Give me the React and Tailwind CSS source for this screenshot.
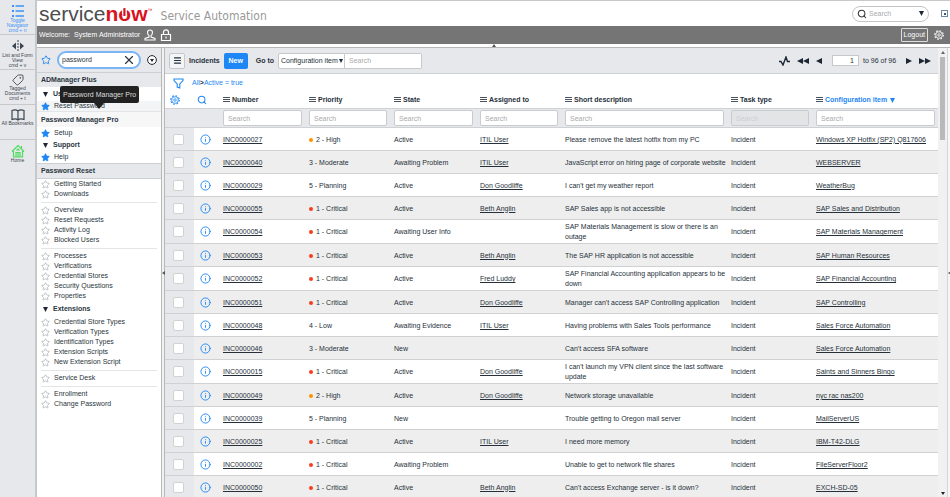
import { useState } from 'react'
import { Star, Search, Info, Menu, Tag, X } from 'lucide-react'

const RAIL_ITEMS = [
  { icon: 'list', lines: ['Toggle', 'Navigator', 'cmd + n'], active: true },
  { icon: 'split', lines: ['List and Form', 'View', 'cmd + v'] },
  { icon: 'tag', lines: ['Tagged', 'Documents', 'cmd + t'] },
  { icon: 'book', lines: ['All Bookmarks'] },
]

const RESET_GROUPS = [
  ['Getting Started', 'Downloads'],
  ['Overview', 'Reset Requests', 'Activity Log', 'Blocked Users'],
  ['Processes', 'Verifications', 'Credential Stores', 'Security Questions', 'Properties'],
]

const EXTENSION_GROUPS = [
  ['Credential Store Types', 'Verification Types', 'Identification Types', 'Extension Scripts', 'New Extension Script'],
  ['Service Desk'],
  ['Enrollment', 'Change Password'],
]

const COLUMNS = ['Number', 'Priority', 'State', 'Assigned to', 'Short description', 'Task type', 'Configuration item']

const INCIDENTS = [
  ['INC0000027', '2 - High', 'Active', 'ITIL User', 'Please remove the latest hotfix from my PC', 'Windows XP Hotfix (SP2) Q817606'],
  ['INC0000040', '3 - Moderate', 'Awaiting Problem', 'ITIL User', 'JavaScript error on hiring page of corporate website', 'WEBSERVER'],
  ['INC0000029', '5 - Planning', 'Active', 'Don Goodliffe', "I can't get my weather report", 'WeatherBug'],
  ['INC0000055', '1 - Critical', 'Active', 'Beth Anglin', 'SAP Sales app is not accessible', 'SAP Sales and Distribution'],
  ['INC0000054', '1 - Critical', 'Awaiting User Info', '', 'SAP Materials Management is slow or there is an outage', 'SAP Materials Management'],
  ['INC0000053', '1 - Critical', 'Active', 'Beth Anglin', 'The SAP HR application is not accessible', 'SAP Human Resources'],
  ['INC0000052', '1 - Critical', 'Active', 'Fred Luddy', 'SAP Financial Accounting application appears to be down', 'SAP Financial Accounting'],
  ['INC0000051', '1 - Critical', 'Active', 'Don Goodliffe', "Manager can't access SAP Controlling application", 'SAP Controlling'],
  ['INC0000048', '4 - Low', 'Awaiting Evidence', 'ITIL User', 'Having problems with Sales Tools performance', 'Sales Force Automation'],
  ['INC0000046', '3 - Moderate', 'New', '', "Can't access SFA software", 'Sales Force Automation'],
  ['INC0000015', '1 - Critical', 'Active', 'Don Goodliffe', "I can't launch my VPN client since the last software update", 'Saints and Sinners Bingo'],
  ['INC0000049', '2 - High', 'Active', 'Don Goodliffe', 'Network storage unavailable', 'nyc rac nas200'],
  ['INC0000039', '5 - Planning', 'New', '', 'Trouble getting to Oregon mail server', 'MailServerUS'],
  ['INC0000025', '1 - Critical', 'Active', 'ITIL User', 'I need more memory', 'IBM-T42-DLG'],
  ['INC0000002', '1 - Critical', 'Awaiting Problem', '', 'Unable to get to network file shares', 'FileServerFloor2'],
  ['INC0000050', '1 - Critical', 'Active', 'Beth Anglin', "Can't access Exchange server - is it down?", 'EXCH-SD-05'],
]

function RailIcon({ name }) {
  if (name === 'tag') return <Tag className="h-3 w-3 rotate-90" strokeWidth={1.8} />
  if (name === 'list') {
    return (
      <svg viewBox="0 0 14 14" className="h-3.5 w-3.5" fill="none" stroke="currentColor" strokeWidth="1.6">
        <path d="M4.5 2H13M4.5 7H13M4.5 12H13" />
        <path d="M1 2h2M1 7h2M1 12h2" strokeWidth="2.2" />
      </svg>
    )
  }
  if (name === 'split') {
    return (
      <svg viewBox="0 0 14 14" className="h-3.5 w-3.5" fill="currentColor">
        <path d="M5 3.5v7L1 7zM9 3.5v7L13 7z" />
        <path d="M7 1v12" stroke="currentColor" strokeDasharray="2 1" />
      </svg>
    )
  }
  return (
    <svg viewBox="0 0 14 12" className="h-3 w-3.5" fill="none" stroke="currentColor" strokeWidth="1.2">
      <path d="M7 2C5.500 .8 3 .8 1 1.500v9c2-.7 4.500-.7 6 .5 1.500-1.200 4-1.200 6-.5v-9C11 .8 8.500 .8 7 2zM7 2v9" />
    </svg>
  )
}

function Rail() {
  return (
    <nav className="flex w-[37px] shrink-0 flex-col border-r-2 border-[#c6c8ca] bg-[#e6e8eb] text-center text-[5px] leading-[5px] text-[#3c4650]">
      {RAIL_ITEMS.map((item) => (
        <a
          key={item.icon}
          href="#"
          className={`flex h-[35px] flex-col items-center border-b border-[#c6c8ca] pt-1 ${
            item.active ? 'text-[#3b93f7]' : ''
          }`}
        >
          <RailIcon name={item.icon} />
          <span className="whitespace-nowrap">
            {item.lines.map((line) => (
              <span key={line} className="block">{line}</span>
            ))}
          </span>
        </a>
      ))}
      <a href="#" className="flex flex-col items-center pt-1">
        <svg viewBox="0 0 14 14" className="h-3.5 w-3.5" fill="none" stroke="#4fdc5e" strokeWidth="1.2">
          <path d="M1 7.500L7 1.500l6 6M2.500 7v6h9V7M5 13V8.500h4V13M7 13V9M5.500 6.500L7 5l1.500 1.500" />
          <path d="M10.500 4.500V2" />
        </svg>
        <span>Home</span>
      </a>
    </nav>
  )
}

function Gear({ className }) {
  return (
    <svg viewBox="0 0 24 24" className={className} fill="none" stroke="currentColor">
      <circle cx="12" cy="12" r="8" strokeWidth="2" />
      <circle cx="12" cy="12" r="10.300" strokeWidth="2.600" strokeDasharray="4 4.090" />
      <circle cx="12" cy="12" r="3" strokeWidth="2" />
    </svg>
  )
}

function Header() {
  return (
    <header className="shrink-0">
      <div className="flex h-[26px] items-center border-t border-[#c9c9c9] bg-white pl-0.5">
        <div className="flex items-center text-[21px] leading-6">
          <span className="text-[#4d4d4f]">service</span>
          <span className="font-bold text-[#d8131f]">n</span>
          <span className="relative font-bold text-[#d8131f]">
            o
            <svg viewBox="0 0 13 24" className="absolute inset-0 h-full w-full">
              <path d="M6.500 5v7" stroke="#fff" strokeWidth="5" />
              <path d="M6.500 6v8" stroke="#d8131f" strokeWidth="2.200" />
            </svg>
          </span>
          <span className="font-bold text-[#d8131f]">w</span>
          <span className="self-start pt-1 text-[5px] leading-[8px] text-[#d8131f]">™</span>
        </div>
        <p className="pl-2 pt-1 font-['DejaVu_Sans_Condensed','DejaVu_Sans',sans-serif] text-[12px] leading-4 text-[#999]">Service Automation</p>
        <label className="ml-auto flex h-4 w-[77px] items-center gap-0.5 rounded-full border border-[#c4c4c4] px-1">
          <Search className="h-2.5 w-2.5 shrink-0 text-[#333]" strokeWidth={2.5} />
          <input aria-label="Global search" placeholder="Search" className="min-w-0 flex-1 outline-none placeholder:text-[#aaa]" />
          <svg viewBox="0 0 6 6" className="h-[5px] w-[5px] shrink-0" fill="#1c2733"><path d="M0 0h6L3 6z" /></svg>
        </label>
        <button aria-label="Toggle panel" className="ml-3 mr-0.5 flex h-[7px] w-[7px] items-center justify-center border border-[#6d87a3]">
          <span className="h-0.5 w-0.5 bg-[#3d5a7a]" />
        </button>
      </div>
      <div className="flex h-[18px] items-center bg-[#757575] pl-0.5 pr-1.5 text-white">
        <span>Welcome:</span>
        <span className="ml-1">System Administrator</span>
        <svg viewBox="0 0 12 12" className="ml-1 h-3 w-3" fill="none" stroke="currentColor" strokeWidth="1.1">
          <path d="M6 1C4.500 1 3.500 2 3.500 3.600c0 1.400.6 2.300 1.500 3V8L1 9.500V11h10V9.500L7 8V6.600c.9-.7 1.500-1.600 1.500-3C8.500 2 7.500 1 6 1z" />
        </svg>
        <svg viewBox="0 0 12 12" className="ml-1 h-3 w-3" fill="none" stroke="currentColor" strokeWidth="1.2">
          <path d="M1.500 5.500h9v6h-9zM3.500 5.500V3.300a2.500 2.500 0 0 1 5 0v2.200M6 7.500v2" />
        </svg>
        <button className="ml-auto h-3.5 rounded-[1px] border border-[#ddd] px-0.5 leading-3">Logout</button>
        <Gear className="ml-1.5 h-2.5 w-2.5" />
      </div>
    </header>
  )
}

function ModuleLink({ label, starred, className = '' }) {
  return (
    <a href="#" className={`flex items-center gap-1 pl-1 ${className}`}>
      <Star
        className={`h-[9px] w-[9px] ${starred ? 'fill-[#1e87f5] text-[#1e87f5]' : 'text-[#a3a8ad]'}`}
        strokeWidth={1.8}
      />
      {label}
    </a>
  )
}

function SectionLabel({ label, className }) {
  return (
    <div className={`flex items-center gap-[5px] pl-1.5 font-bold ${className}`}>
      <svg viewBox="0 0 6 6" className="h-[5px] w-[5px]" fill="#1c2733"><path d="M0 0h6L3 6z" /></svg>
      {label}
    </div>
  )
}

function ModuleGroups({ groups }) {
  return groups.map((group, i) => (
    <div key={group[0]} className={i > 0 ? 'mx-1 mt-[3px] border-t border-[#e3e5e7] pt-0.5' : 'mx-1'}>
      {group.map((label) => (
        <ModuleLink key={label} label={label} className="-ml-1 h-2.5" />
      ))}
    </div>
  ))
}

function Navigator() {
  const [filter, setFilter] = useState('password')

  return (
    <aside className="w-[124px] shrink-0 overflow-hidden bg-white text-[#2b3640]">
      <div className="flex h-[25px] items-center border-b border-[#cdd0d3] bg-[#e6e8eb] pl-1">
        <Star className="h-2.5 w-2.5 text-[#1e87f5]" strokeWidth={2.2} />
        <div className="ml-1.5 flex h-[18px] w-[84px] items-center rounded-full border-2 border-[#79b5f5] bg-white pl-[3px] pr-[3px]">
          <input
            aria-label="Filter navigator"
            value={filter}
            onChange={(e) => setFilter(e.target.value)}
            className="min-w-0 flex-1 outline-none"
          />
          <button aria-label="Clear" onClick={() => setFilter('')}>
            <X className="h-3.5 w-3.5" strokeWidth={2} />
          </button>
        </div>
        <svg viewBox="0 0 10 10" className="ml-1.5 h-2.5 w-2.5">
          <circle cx="5" cy="5" r="4.400" fill="#fff" stroke="#1c2733" />
          <path d="M3 4h4L5 7z" fill="#1c2733" />
        </svg>
      </div>
      <h2 className="flex h-3.5 items-center bg-[#e6e8eb] pl-1 font-bold">ADManager Plus</h2>
      <div className="relative">
        <SectionLabel label="User" className="h-[14px]" />
        <div className="absolute left-[23px] top-[-1px] rounded-xs bg-[#222] px-[3px] leading-[17px] whitespace-nowrap text-[#ddd]">
          Password Manager Pro
          <svg viewBox="0 0 10 6" className="absolute left-[34px] top-full h-1.5 w-2.5" fill="#222"><path d="M0 0h10L5 6z" /></svg>
        </div>
      </div>
      <ModuleLink label="Reset Password" starred className="h-2.5 bg-[#f3f4f5]" />
      <h2 className="flex h-4 items-center border-t border-[#e3e5e7] bg-[#f7f7f8] pl-1 font-bold">Password Manager Pro</h2>
      <ModuleLink label="Setup" starred className="h-3" />
      <SectionLabel label="Support" className="h-3" />
      <ModuleLink label="Help" starred className="h-3" />
      <h2 className="flex h-4 items-center border-y border-[#cdd0d3] bg-[#e6e8eb] pl-1 font-bold">Password Reset</h2>
      <ModuleGroups groups={RESET_GROUPS} />
      <SectionLabel label="Extensions" className="h-4" />
      <ModuleGroups groups={EXTENSION_GROUPS} />
    </aside>
  )
}

function Toolbar() {
  return (
    <div className="flex h-[26px] shrink-0 items-center border-b border-[#cdd0d3] bg-[#e6e8eb] pl-1 pr-[7px]">
      <button aria-label="List menu" className="flex h-4 w-4 items-center justify-center rounded-xs border border-[#c6c8ca] bg-[#f3f4f5]">
        <Menu className="h-[9px] w-[9px]" strokeWidth={3} />
      </button>
      <h1 className="ml-1 font-bold">Incidents</h1>
      <button className="ml-1 h-4 w-6 rounded-xs bg-[#1e87f5] font-bold text-white">New</button>
      <label htmlFor="goto" className="ml-2 font-bold">Go to</label>
      <div className="relative ml-1 h-4 w-[67px]">
        <select id="goto" className="h-4 w-full appearance-none rounded-l-xs border border-[#c6c8ca] bg-white pl-0.5 outline-none">
          <option>Configuration item</option>
        </select>
        <svg viewBox="0 0 6 6" className="pointer-events-none absolute right-0.5 top-1.5 h-1 w-1" fill="#1c2733"><path d="M0 0h6L3 6z" /></svg>
      </div>
      <input aria-label="Go to value" placeholder="Search" className="h-4 w-[77px] rounded-r-xs border border-l-0 border-[#c6c8ca] bg-white px-1 outline-none placeholder:text-[#aaa]" />
      <svg viewBox="0 0 11 10" className="ml-auto h-2.5 w-[11px]" fill="none" stroke="#1c2733" strokeWidth="1.4">
        <path d="M0 5.500h2L4 9 7 1l1.500 4.500H11" />
      </svg>
      <button aria-label="First page" className="ml-[7px]">
        <svg viewBox="0 0 12 6" className="h-1.5 w-3" fill="#1c2733"><path d="M6 0v6L0 3zM12 0v6L6 3z" /></svg>
      </button>
      <button aria-label="Previous page" className="ml-[7px]">
        <svg viewBox="0 0 6 6" className="h-1.5 w-1.5" fill="#1c2733"><path d="M6 0v6L0 3z" /></svg>
      </button>
      <input aria-label="Page" defaultValue="1" className="ml-2.5 h-[11px] w-[27px] border border-[#c6c8ca] bg-white pr-1 text-right outline-none" />
      <span className="ml-1 w-[43px]">to 96 of 96</span>
      <button aria-label="Next page">
        <svg viewBox="0 0 6 6" className="h-1.5 w-1.5" fill="#1c2733"><path d="M0 0v6l6-3z" /></svg>
      </button>
      <button aria-label="Last page" className="ml-[7px]">
        <svg viewBox="0 0 12 6" className="h-1.5 w-3" fill="#1c2733"><path d="M0 0v6l6-3zM6 0v6l6-3z" /></svg>
      </button>
    </div>
  )
}

function Priority({ value }) {
  const level = value[0]
  return (
    <span className="flex items-center gap-[3px]">
      {level === '1' && <span className="h-1 w-1 rounded-full bg-[#fb3b20]" />}
      {level === '2' && <span className="h-1 w-1 rounded-full bg-[#ff9100]" />}
      {value}
    </span>
  )
}

function IncidentTable() {
  const cell = 'h-[23px] border-b border-[#cfd1d3] pt-0.5 pb-px pl-1'
  const link = 'underline underline-offset-1'

  return (
    <table className="w-full table-fixed border-separate border-spacing-0 text-left">
      <colgroup>
        <col className="w-[29px]" />
        <col className="w-[25px]" />
        <col className="w-[86px]" />
        <col className="w-[85px]" />
        <col className="w-[86px]" />
        <col className="w-[85px]" />
        <col />
        <col className="w-[85px]" />
        <col className="w-[126px]" />
      </colgroup>
      <thead>
        <tr>
          <th className="h-4 pl-[5px]">
            <button aria-label="Personalize list" className="block text-[#1e87f5]"><Gear className="h-2.5 w-2.5" /></button>
          </th>
          <th className="pl-[3px]">
            <button aria-label="Search list" className="block text-[#1e87f5]"><Search className="h-2.5 w-2.5" strokeWidth={2.5} /></button>
          </th>
          {COLUMNS.map((name) => (
            <th key={name} className="pl-1 font-bold">
              <span className="flex items-center gap-0.5 whitespace-nowrap">
                <svg viewBox="0 0 7 6" className="h-1.5 w-[7px]" fill="#4a545e" shapeRendering="crispEdges"><path d="M0 0h7v1H0zM0 2h7v1H0zM0 4h7v1H0z" /></svg>
                {name === 'Configuration item' ? (
                  <a href="#" className="flex items-center gap-[3px] text-[#1e87f5]">
                    {name}
                    <svg viewBox="0 0 6 6" className="h-[5px] w-[5px]" fill="currentColor"><path d="M0 0h6L3 6z" /></svg>
                  </a>
                ) : (
                  name
                )}
              </span>
            </th>
          ))}
        </tr>
        <tr className="bg-[#e6e8eb]">
          <td className="h-5 border-y border-[#cfd1d3]" colSpan={2} />
          {COLUMNS.map((name) => (
            <td key={name} className="border-y border-[#cfd1d3] pl-1 pr-[3px]">
              <input
                aria-label={`Search ${name}`}
                placeholder="Search"
                disabled={name === 'Task type'}
                className="block h-4 w-full rounded-xs border border-[#c9cbce] bg-white px-1 font-normal outline-none placeholder:text-[#aaa] disabled:bg-[#e2e4e6] disabled:placeholder:text-[#cdcfd2]"
              />
            </td>
          ))}
        </tr>
      </thead>
      <tbody>
        {INCIDENTS.map(([number, priority, state, assigned, description, item]) => (
          <tr key={number} className="bg-white even:bg-[#eeeeee]">
            <td className="border-b border-[#cfd1d3] bg-[#e6e8eb] pl-2">
              <input type="checkbox" aria-label={`Select ${number}`} className="block h-[11px] w-[11px] appearance-none rounded-xs border border-[#cfd1d3] bg-white" />
            </td>
            <td className="border-b border-[#cfd1d3] pl-1.5">
              <button aria-label={`Preview ${number}`} className="block text-[#1e87f5]"><Info className="h-[11px] w-[11px]" strokeWidth={2} /></button>
            </td>
            <td className={cell}><a href="#" className={link}>{number}</a></td>
            <td className={cell}><Priority value={priority} /></td>
            <td className={cell}>{state}</td>
            <td className={cell}>{assigned && <a href="#" className={link}>{assigned}</a>}</td>
            <td className={cell}>{description}</td>
            <td className={cell}>Incident</td>
            <td className={cell}><a href="#" className={link}>{item}</a></td>
          </tr>
        ))}
      </tbody>
    </table>
  )
}

function Scrollbar() {
  return (
    <div className="flex w-[9px] shrink-0 flex-col items-center bg-[#f1f1f1] py-0.5">
      <svg viewBox="0 0 4 3" className="mt-px mb-[3px] h-[3px] w-1" fill="#666"><path d="M0 3h4L2 0z" /></svg>
      <div className="h-[83px] w-[5px] bg-[#b9b9b9]" />
      <svg viewBox="0 0 4 3" className="mt-auto h-[3px] w-1" fill="#222"><path d="M0 0h4L2 3z" /></svg>
    </div>
  )
}

export default function App() {
  return (
    <div className="flex h-screen overflow-hidden bg-white font-['Liberation_Sans',Arial,sans-serif] text-[7px] leading-[10px] text-[#26303a]">
      <Rail />
      <div className="flex min-w-0 flex-1 flex-col">
        <Header />
        <div className="flex h-1 shrink-0 items-center justify-center border-b border-[#b8b8b8]">
          <svg viewBox="0 0 4 3" className="h-[3px] w-1" fill="#555"><path d="M0 3h4L2 0z" /></svg>
        </div>
        <div className="flex min-h-0 flex-1">
          <Navigator />
          <div className="flex w-1 shrink-0 items-center justify-center border-x border-[#b8b8b8] bg-[#f1f1f1]">
            <svg viewBox="0 0 3 4" className="h-1 w-[3px] shrink-0" fill="#555"><path d="M3 0v4L0 2z" /></svg>
          </div>
          <main className="flex min-w-0 flex-1 flex-col overflow-hidden">
            <Toolbar />
            <div className="flex h-[18px] shrink-0 items-center pl-2 text-[#1e87f5]">
              <svg viewBox="0 0 11 11" className="h-[11px] w-[11px]" fill="none" stroke="currentColor" strokeWidth="1.1">
                <path d="M1 1h9v1.500L6.800 6v4L4.200 9V6L1 2.500z" />
              </svg>
              <a href="#" className="ml-2">All</a>
              <span className="font-bold text-[#1c2733]">&gt;</span>
              <a href="#">Active = true</a>
            </div>
            <IncidentTable />
          </main>
          <Scrollbar />
          <div className="flex w-[3px] shrink-0 items-center border-l border-[#d4d4d4] bg-[#f7f7f7]">
            <svg viewBox="0 0 3 4" className="h-1 w-[3px] shrink-0" fill="#555"><path d="M3 0v4L0 2z" /></svg>
          </div>
        </div>
      </div>
    </div>
  )
}
